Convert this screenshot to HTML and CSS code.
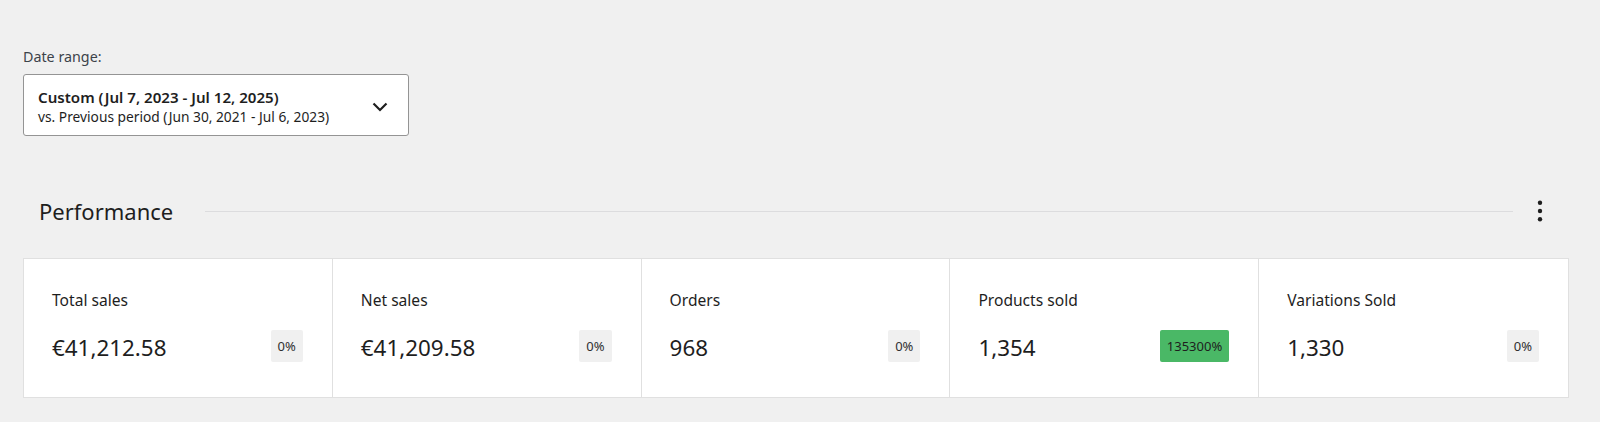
FILE: index.html
```html
<!DOCTYPE html>
<html lang="en">
<head>
<meta charset="utf-8">
<title>Analytics overview</title>
<link rel="stylesheet" href="styles.css">
</head>
<body>
<div class="page">
  <div class="date-filter">
    <label class="date-label">Date range:</label>
    <button class="date-box" type="button">
      <span class="date-text">
        <span class="date-main">Custom (Jul 7, 2023 - Jul 12, 2025)</span>
        <span class="date-compare">vs. Previous period (Jun 30, 2021 - Jul 6, 2023)</span>
      </span>
      <svg class="chevron" width="16" height="10" viewBox="0 0 16 10" aria-hidden="true"><polyline points="1.5,1.5 8,8 14.5,1.5" fill="none" stroke="#1e1e1e" stroke-width="2.2"/></svg>
    </button>
  </div>

  <div class="section-head">
    <h2 class="section-title">Performance</h2>
    <div class="section-rule"></div>
    <svg class="kebab" width="24" height="24" viewBox="0 0 24 24" aria-hidden="true"><circle cx="12" cy="3.7" r="2.2" fill="#1e1e1e"/><circle cx="12" cy="12" r="2.2" fill="#1e1e1e"/><circle cx="12" cy="20.3" r="2.2" fill="#1e1e1e"/></svg>
  </div>

  <div class="summary">
    <div class="summary-item">
      <div class="item-label">Total sales</div>
      <div class="item-row"><span class="item-value">€41,212.58</span><span class="delta">0%</span></div>
    </div>
    <div class="summary-item">
      <div class="item-label">Net sales</div>
      <div class="item-row"><span class="item-value">€41,209.58</span><span class="delta">0%</span></div>
    </div>
    <div class="summary-item">
      <div class="item-label">Orders</div>
      <div class="item-row"><span class="item-value">968</span><span class="delta">0%</span></div>
    </div>
    <div class="summary-item">
      <div class="item-label">Products sold</div>
      <div class="item-row"><span class="item-value">1,354</span><span class="delta delta-up">135300%</span></div>
    </div>
    <div class="summary-item">
      <div class="item-label">Variations Sold</div>
      <div class="item-row"><span class="item-value">1,330</span><span class="delta">0%</span></div>
    </div>
  </div>
</div>
</body>
</html>
```

FILE: styles.css
```css
* { box-sizing: border-box; }

html, body {
  margin: 0;
  background: #f0f0f0;
}

body {
  font-family: "Noto Sans", "Open Sans", sans-serif;
  color: #1e1e1e;
}

.page {
  padding: 49px 31px 0 23px;
}

.date-filter {
  display: flex;
  flex-direction: column;
  align-items: flex-start;
}

.date-label {
  font-size: 14.3px;
  line-height: 16px;
  color: #3c434a;
  margin-bottom: 9px;
}

.date-box {
  width: 386px;
  height: 62px;
  border: 1px solid #949494;
  border-radius: 3px;
  background: #fff;
  padding: 12px 20px 8px 14px;
  display: flex;
  align-items: center;
  justify-content: space-between;
  font-family: inherit;
  text-align: left;
  cursor: pointer;
}

.date-text {
  display: flex;
  flex-direction: column;
}

.date-main {
  font-size: 15.1px;
  font-weight: 600;
  line-height: 20px;
  color: #1e1e1e;
}

.date-compare {
  font-size: 13.75px;
  line-height: 20px;
  color: #1e1e1e;
}

.chevron { display: block; }

.section-head {
  margin-top: 55px;
  height: 40px;
  display: flex;
  align-items: center;
  padding: 0 17px 0 16px;
}

.section-title {
  margin: 0;
  font-size: 22px;
  font-weight: 400;
  line-height: 40px;
  color: #1e1e1e;
}

.section-rule {
  flex: 1;
  height: 1px;
  background: #dcdcde;
  margin: 0 15px 0 32px;
}

.kebab { display: block; }

.summary {
  margin-top: 27px;
  display: grid;
  grid-template-columns: repeat(5, 1fr);
  border: 1px solid #e0e0e0;
  background: #fff;
}

.summary-item {
  height: 138px;
  padding: 29px 29px 0 28px;
  border-right: 1px solid #e0e0e0;
}

.summary-item:last-child { border-right: 0; }

.item-label {
  font-size: 15.6px;
  line-height: 24px;
  color: #1e1e1e;
}

.item-row {
  margin-top: 18px;
  height: 32px;
  display: flex;
  align-items: center;
  justify-content: space-between;
}

.item-value {
  font-size: 22.4px;
  line-height: 32px;
  padding-top: 3px;
  color: #1e1e1e;
}

.delta {
  height: 32px;
  padding: 0 7px;
  border-radius: 2px;
  background: #f0f0f0;
  font-size: 13px;
  line-height: 32px;
  color: #2f2f2f;
}

.delta-up {
  background: #4ab866;
  color: #1e1e1e;
}
```
